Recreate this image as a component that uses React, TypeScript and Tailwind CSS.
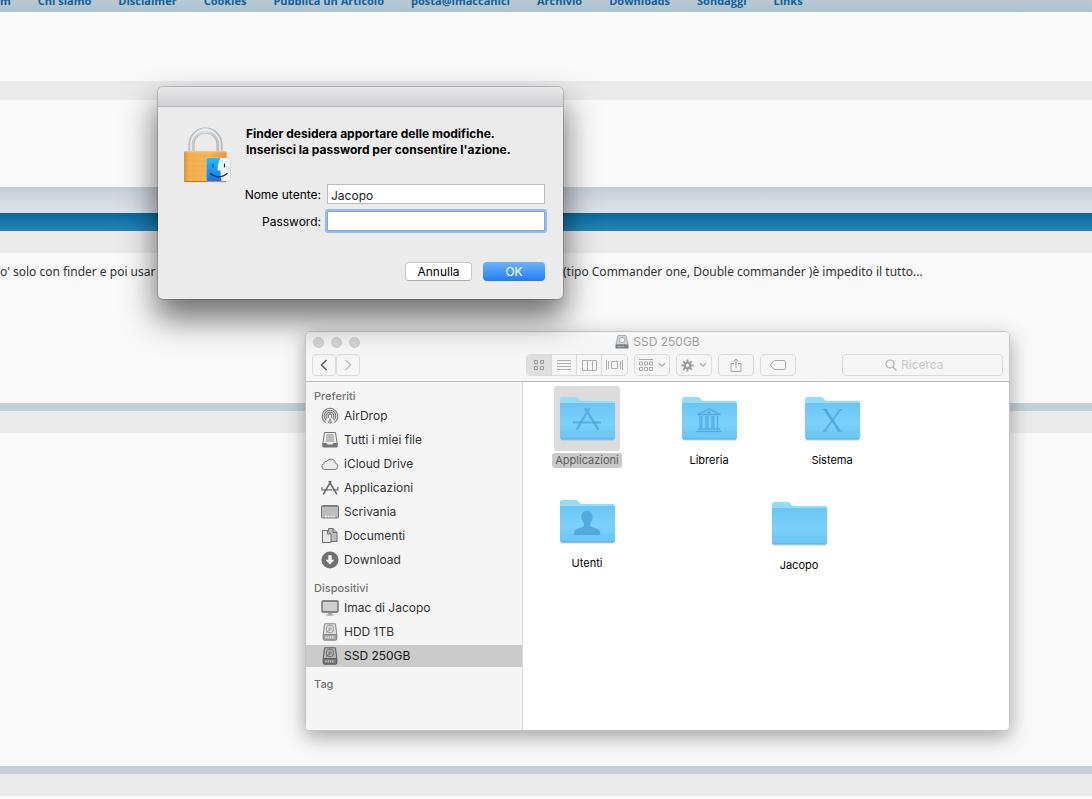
import { useState } from "react";
import type { ReactNode } from "react";

const navLinks = [
    "m",
    "Chi siamo",
    "Disclaimer",
    "Cookies",
    "Pubblica un Articolo",
    "posta@imaccanici",
    "Archivio",
    "Downloads",
    "Sondaggi",
    "Links",
];

/* ---------- sidebar icons ---------- */

function AirDropIcon() {
    return (
        <svg width="18" height="18" viewBox="0 0 18 18" fill="none" stroke="#757575" strokeWidth="1.1" strokeLinecap="round">
            <path d="M4.2 15.2a7.8 7.8 0 1 1 9.6 0" />
            <path d="M5 13.2a5.8 5.8 0 1 1 8 0" />
            <path d="M6 11.4a3.8 3.8 0 1 1 6 0" />
            <path d="M7.6 10.2a1.9 1.9 0 1 1 2.8 0" />
            <path d="M9 10l-2.6 6.6h5.2z" fill="#a3a3a3" stroke="none" />
        </svg>
    );
}

function AllFilesIcon() {
    return (
        <svg width="18" height="18" viewBox="0 0 18 18" fill="none" stroke="#757575">
            <path d="M3.5 1.5h11l1.500 10v4h-14v-4z" fill="#ececec" />
            <path d="M5.500 4h7M5.200 6h7.600M5 8h8M4.800 10h8.400" stroke="#8a8a8a" />
            <path d="M1.500 12h4l1 1.500h5l1-1.500h4v3.500q0 1-1 1h-13q-1 0-1-1z" fill="#757575" stroke="none" />
        </svg>
    );
}

function CloudIcon() {
    return (
        <svg width="18" height="18" viewBox="0 0 18 18" fill="#ececec" stroke="#7a7a7a">
            <path d="M4 14.5a3 3 0 0 1-.9-5.9 2.3 2.3 0 0 1 2.9-2.3 4.4 4.4 0 0 1 8.3 1.9 3.2 3.2 0 0 1-.3 6.3z" />
        </svg>
    );
}

function AppsIcon() {
    return (
        <svg width="18" height="18" viewBox="0 0 18 18" fill="none" stroke="#6b6b6b" strokeWidth="1.3" strokeLinecap="round">
            <path d="M9.8 2.5L2.6 14.8M8.2 2.5l7.4 12.4" strokeWidth="1.6" />
            <path d="M.8 10.8h16.4" strokeDasharray="10 1.6" />
            <path d="M1 8.6v1M16.8 8.6v1" />
        </svg>
    );
}

function DesktopIcon() {
    return (
        <svg width="18" height="18" viewBox="0 0 18 18" fill="none">
            <rect x=".5" y="2.5" width="17" height="12.5" rx="1" fill="#bdbdbd" stroke="#777" />
            <path d="M1 3.5h16" stroke="#8a8a8a" />
            <path d="M4 13.5h10" stroke="#f5f5f5" strokeWidth="1.6" strokeDasharray="1.5 1.2" />
        </svg>
    );
}

function DocumentsIcon() {
    return (
        <svg width="18" height="18" viewBox="0 0 18 18" fill="#bdbdbd" stroke="#6f6f6f">
            <path d="M7.5 1.5H12L16 5.5v9H7.5z" />
            <path d="M12 1.5v4h4" />
            <path d="M1.5 3.5h5L10 7v8.500H1.500z" fill="#e6e6e6" />
            <path d="M6.500 3.500V7H10" />
        </svg>
    );
}

function DownloadIcon() {
    return (
        <svg width="18" height="18" viewBox="0 0 18 18">
            <circle cx="9" cy="9" r="8.5" fill="#707070" />
            <path d="M7.3 4.3h3.4v4.5h2.8L9 13.6 4.5 8.8h2.8z" fill="#f5f5f5" />
        </svg>
    );
}

function ImacIcon() {
    return (
        <svg width="18" height="18" viewBox="0 0 18 18" fill="none">
            <rect x="1" y="2" width="16" height="11" rx="1" fill="#cfcfcf" stroke="#666" strokeWidth="1.3" />
            <path d="M7.5 13.5h3l.5 2H7z" fill="#9a9a9a" />
            <path d="M5.5 16h7" stroke="#8a8a8a" />
        </svg>
    );
}

function DiskIcon({ dark }: { dark?: boolean }) {
    const line = dark ? "#5a5a5a" : "#858585";
    return (
        <svg width="18" height="18" viewBox="0 0 18 18" fill="none" stroke={line}>
            <path d="M3.5.8h11l1.200 10.200v5q0 1-1 1H3.300q-1 0-1-1v-5z" fill={dark ? "#b5b5b5" : "#e0e0e0"} />
            <circle cx="9" cy="6" r="3.8" strokeWidth=".8" />
            <circle cx="9" cy="6" r="1.2" strokeWidth=".8" />
            <path d="M5.5 9.5L8 7.5" strokeWidth=".8" />
            <path d="M2.300 11.500h13.400v4.500q0 1-1 1H3.300q-1 0-1-1z" fill={dark ? "#777" : "#a5a5a5"} />
            <path d="M4.5 14.3h9" stroke={dark ? "#d5d5d5" : "#f3f3f3"} strokeWidth="1.8" strokeDasharray="1.2 1" />
        </svg>
    );
}

/* ---------- dialog ---------- */

function LockIcon() {
    return (
        <svg width="48" height="58" viewBox="0 0 48 58" fill="none">
            <defs>
                <linearGradient id="steel" x1="0" x2="1" y1="0" y2="0">
                    <stop offset="0" stopColor="#c3c7cb" />
                    <stop offset=".5" stopColor="#dfe2e5" />
                    <stop offset="1" stopColor="#b9bdc2" />
                </linearGradient>
                <linearGradient id="brass" x1="0" x2="1" y1="0" y2="0">
                    <stop offset="0" stopColor="#dc9338" />
                    <stop offset=".12" stopColor="#f3b050" />
                    <stop offset=".6" stopColor="#f6b55c" />
                    <stop offset="1" stopColor="#e0973b" />
                </linearGradient>
                <linearGradient id="faceBlue" x1="0" x2="0" y1="0" y2="1">
                    <stop offset="0" stopColor="#22c0fb" />
                    <stop offset="1" stopColor="#1a73e4" />
                </linearGradient>
            </defs>
            <path d="M7.5 26V18.5a14 14 0 0 1 28 0V26" stroke="#a9aeb3" strokeWidth="6" />
            <path d="M7.5 26V18.5a14 14 0 0 1 28 0V26" stroke="url(#steel)" strokeWidth="4.8" />
            <path d="M7 26V18.5A14.5 14.5 0 0 1 21.5 4a14.5 14.5 0 0 1 14.5 14.5V26" stroke="#f0f2f3" strokeWidth="1.4" />
            <rect x="0" y="25" width="42.5" height="31" rx="1.5" fill="url(#brass)" />
            <path d="M.5 25.8h41.5" stroke="#f9c984" />
            <path d="M.5 30h41.5M.5 35h41.5M.5 40h41.5M.5 45h41.5M.5 50h41.5" stroke="#e39a3c" strokeOpacity=".25" />
            <path d="M.5 55.6h41.5" stroke="#b87423" />
            <rect x="22.5" y="32" width="24" height="23" rx="1.5" fill="#f0f3f8" stroke="#c6ccd5" strokeWidth=".5" />
            <path d="M24 32h12.500c-2 4-2.800 8-3 12.500h3c0 4 .3 7 1 10.500H24q-1.500 0-1.500-1.500v-20q0-1.500 1.500-1.500z" fill="url(#faceBlue)" />
            <path d="M29 38v3M40.5 38v3" stroke="#16345c" strokeWidth="1.2" strokeLinecap="round" />
            <path d="M26.5 47.5c4.5 4.4 12 4.4 16.5 0" stroke="#16345c" strokeWidth="1.2" strokeLinecap="round" />
        </svg>
    );
}

function AuthDialog() {
    const [user, setUser] = useState("Jacopo");
    const [password, setPassword] = useState("");

    return (
        <form
            onSubmit={(e) => e.preventDefault()}
            className="absolute left-[158px] top-[87px] w-[405px] rounded-[5px] bg-[#ebebeb] font-[Inter,sans-serif] text-xs text-black shadow-[0_0_0_1px_rgba(0,0,0,0.18),0_18px_32px_2px_rgba(0,0,0,0.55)]"
        >
            <div className="h-5 rounded-t-[5px] border-b border-[#b5b5b5] bg-linear-to-b from-[#e9e7e9] to-[#d2d1d3]"></div>
            <div className="flex gap-[14px] pt-[19px] pr-[18px] pb-[18px] pl-[26px]">
                <LockIcon />
                <div className="flex-1">
                    <p className="font-bold leading-4">
                        Finder desidera apportare delle modifiche.
                        <br />
                        Inserisci la password per consentire l'azione.
                    </p>
                    <div className="mt-[26px] grid grid-cols-[75px_1fr] items-center gap-x-1.5 gap-y-[7px]">
                        <label htmlFor="user" className="justify-self-end pt-0.5 whitespace-nowrap">
                            Nome utente:
                        </label>
                        <input
                            id="user"
                            type="text"
                            value={user}
                            onChange={(e) => setUser(e.target.value)}
                            className="h-5 w-full border border-[#bdbdbd] bg-white px-[3px] pt-0.5 text-[#222] outline-none"
                        />
                        <label htmlFor="password" className="justify-self-end pt-0.5 whitespace-nowrap">
                            Password:
                        </label>
                        <input
                            id="password"
                            type="password"
                            value={password}
                            onChange={(e) => setPassword(e.target.value)}
                            className="h-5 w-full rounded-[1px] border border-[#7ea7de] bg-white px-[3px] shadow-[0_0_0_2px_#96bdf0] outline-none"
                        />
                    </div>
                    <div className="mt-[31px] flex justify-end gap-[11px]">
                        <button
                            type="button"
                            className="h-[19px] w-[67px] rounded-[4px] border border-[#c6c6c6] border-b-[#ababab] bg-white leading-none"
                        >
                            Annulla
                        </button>
                        <button
                            type="submit"
                            className="h-[19px] w-[62px] rounded-[4px] bg-linear-to-b from-[#6cb3fa] to-[#1f7cfb] leading-none text-white"
                        >
                            OK
                        </button>
                    </div>
                </div>
            </div>
        </form>
    );
}

/* ---------- finder ---------- */

type folderProps = {
    name: string;
    place: string;
    selected?: boolean;
    children?: ReactNode;
};

function Folder({ name, place, selected, children }: folderProps) {
    return (
        <button type="button" className={`absolute flex w-20 flex-col items-center gap-0.5 ${place}`}>
            <span className={`flex h-[65px] w-[66px] items-center justify-center rounded-[3px] ${selected ? "bg-[#dcdcdc]" : ""}`}>
                <svg width="56" height="46" viewBox="0 1 56 46" fill="none">
                    <defs>
                        <linearGradient id="folderFront" x1="0" x2="0" y1="0" y2="1">
                            <stop offset="0" stopColor="#6bc6f5" />
                            <stop offset=".55" stopColor="#7bd1fb" />
                            <stop offset="1" stopColor="#6ac4f4" />
                        </linearGradient>
                    </defs>
                    <path d="M2 45h53" stroke="#8f9aa3" strokeOpacity=".45" />
                    <path d="M1 4Q1 2 3 2h13.700q1.300 0 2.200 1l1.800 2q.8 1 2.300 1h31q2 0 2 2v30H1z" fill="#93dcfc" />
                    <path d="M1 8.500h55v34q0 2-2 2H3q-2 0-2-2z" fill="url(#folderFront)" />
                    <path d="M1 8.500h55" stroke="#5fbdee" strokeOpacity=".6" />
                    <path d="M1 37h55" stroke="#5fb9ea" strokeOpacity=".35" />
                    <path d="M2 44h53" stroke="#58aad9" strokeOpacity=".8" />
                    {children}
                </svg>
            </span>
            <span
                className={`rounded-[3px] px-[3px] text-[11px] leading-[15px] ${selected ? "bg-[#c9c9c9] text-[#5a5a5a]" : "text-black"}`}
            >
                {name}
            </span>
        </button>
    );
}

type sideItem = { label: string; icon: ReactNode; active?: boolean };

const favourites: sideItem[] = [
    { label: "AirDrop", icon: <AirDropIcon /> },
    { label: "Tutti i miei file", icon: <AllFilesIcon /> },
    { label: "iCloud Drive", icon: <CloudIcon /> },
    { label: "Applicazioni", icon: <AppsIcon /> },
    { label: "Scrivania", icon: <DesktopIcon /> },
    { label: "Documenti", icon: <DocumentsIcon /> },
    { label: "Download", icon: <DownloadIcon /> },
];

const devices: sideItem[] = [
    { label: "Imac di Jacopo", icon: <ImacIcon /> },
    { label: "HDD 1TB", icon: <DiskIcon /> },
    { label: "SSD 250GB", icon: <DiskIcon dark />, active: true },
];

function SideSection({ title, items }: { title: string; items: sideItem[] }) {
    return (
        <section>
            <h2 className="mb-px pl-2 text-[11px] font-medium leading-4 text-[#727272]">{title}</h2>
            <ul className="flex flex-col gap-0.5">
                {items.map((item) => (
                    <li key={item.label}>
                        <a
                            href="#"
                            className={`flex h-[22px] items-center gap-[5px] pl-[15px] ${item.active ? "bg-[#cbcbcb] text-[#111]" : "text-[#333]"}`}
                        >
                            {item.icon}
                            {item.label}
                        </a>
                    </li>
                ))}
            </ul>
        </section>
    );
}

function Chevron() {
    return (
        <svg width="8" height="6" viewBox="0 0 8 6" fill="none" stroke="#a8a8a8" strokeWidth="1.3">
            <path d="M1 1.2l3 3 3-3" />
        </svg>
    );
}

const navBtn = "flex h-[22px] w-6 items-center justify-center rounded-[4px] border border-[#dadada]";
const toolBtn = "flex h-[22px] w-9 items-center justify-center gap-[5px] rounded-[4px] border border-[#dadada]";

function Toolbar() {
    return (
        <div className="flex h-[22px] items-center px-1.5">
            <div className="mr-auto flex">
                <button type="button" aria-label="Indietro" className={navBtn}>
                    <svg width="8" height="12" viewBox="0 0 8 12" fill="none" stroke="#555" strokeWidth="1.4">
                        <path d="M6.5 1L1.5 6l5 5" />
                    </svg>
                </button>
                <button type="button" aria-label="Avanti" className={navBtn}>
                    <svg width="8" height="12" viewBox="0 0 8 12" fill="none" stroke="#bdbdbd" strokeWidth="1.4">
                        <path d="M1.5 1l5 5-5 5" />
                    </svg>
                </button>
            </div>
            <div className="mr-[46px] flex gap-1.5">
                <div className="grid h-[22px] w-[102px] grid-cols-4 divide-x divide-[#dadada] overflow-hidden rounded-[4px] border border-[#dadada]">
                    <button type="button" aria-label="Icone" className="flex items-center justify-center bg-[#dedede]">
                        <svg width="10" height="10" viewBox="0 0 10 10" fill="none" stroke="#9a9a9a">
                            <path d="M.5.5h3v3h-3zM6.5.5h3v3h-3zM.5 6.5h3v3h-3zM6.5 6.5h3v3h-3z" />
                        </svg>
                    </button>
                    <button type="button" aria-label="Elenco" className="flex items-center justify-center">
                        <svg width="14" height="10" viewBox="0 0 14 10" stroke="#b0b0b0">
                            <path d="M0 .5h14M0 3.5h14M0 6.5h14M0 9.5h14" />
                        </svg>
                    </button>
                    <button type="button" aria-label="Colonne" className="flex items-center justify-center">
                        <svg width="15" height="11" viewBox="0 0 15 11" fill="none" stroke="#b0b0b0">
                            <path d="M.5.5h14v10H.5zM5.5.5v10M10.5.5v10" />
                        </svg>
                    </button>
                    <button type="button" aria-label="Cover Flow" className="flex items-center justify-center">
                        <svg width="17" height="10" viewBox="0 0 17 10" fill="none" stroke="#b0b0b0">
                            <path d="M.5 0v10M2.5 1v8M5.500 1.500h6v7h-6zM14.500 1v8M16.500 0v10" />
                        </svg>
                    </button>
                </div>
                <button type="button" aria-label="Disponi" className={toolBtn}>
                    <svg width="14" height="12" viewBox="0 0 14 12" fill="none" stroke="#a8a8a8">
                        <path d="M0 .5h14M.5 3h3v3h-3zM5.5 3h3v3h-3zM10.5 3h3v3h-3zM.5 8.5h3v3h-3zM5.5 8.5h3v3h-3zM10.5 8.5h3v3h-3z" />
                    </svg>
                    <Chevron />
                </button>
                <button type="button" aria-label="Azioni" className={toolBtn}>
                    <svg width="13" height="13" viewBox="0 0 14 14" fill="none" stroke="#9c9c9c">
                        <circle cx="7" cy="7" r="3" strokeWidth="2.4" />
                        <path
                            d="M7 .5v3M7 10.5v3M.5 7h3M10.5 7h3M2.4 2.4l2.2 2.2M9.4 9.4l2.2 2.2M11.6 2.4L9.4 4.6M4.6 9.4l-2.2 2.2"
                            strokeWidth="1.9"
                        />
                    </svg>
                    <Chevron />
                </button>
                <button type="button" aria-label="Condividi" className={toolBtn}>
                    <svg width="12" height="14" viewBox="0 0 12 14" fill="none" stroke="#a8a8a8">
                        <path d="M4 5.5H1v8h10v-8H8M6 10V1M3.5 3.5L6 1l2.5 2.5" />
                    </svg>
                </button>
                <button type="button" aria-label="Tag" className={toolBtn}>
                    <svg width="16" height="10" viewBox="0 0 16 10" fill="none" stroke="#a8a8a8">
                        <path d="M4.5.5h10q1 0 1 1v7q0 1-1 1h-10L1 6.200q-1-1.200 0-2.400z" />
                        <circle cx="4.3" cy="5" r=".6" fill="#a8a8a8" stroke="none" />
                    </svg>
                </button>
            </div>
            <div className="flex h-[22px] w-[161px] items-center gap-1 rounded-[4px] border border-[#dadada] pl-[42px]">
                <svg width="12" height="12" viewBox="0 0 12 12" fill="none" stroke="#adadad" strokeWidth="1.2" className="shrink-0">
                    <circle cx="5" cy="5" r="4" />
                    <path d="M8 8l3.5 3.5" />
                </svg>
                <input
                    type="search"
                    aria-label="Ricerca"
                    placeholder="Ricerca"
                    className="w-full min-w-0 bg-transparent outline-none placeholder:text-[#c6c6c6]"
                />
            </div>
        </div>
    );
}

function FinderWindow() {
    return (
        <div className="absolute left-[305px] top-[331px] w-[705px] rounded-[5px] shadow-[0_6px_20px_rgba(0,0,0,0.35)]">
            <div className="overflow-hidden rounded-[5px] border border-[#c4c4c4] bg-white font-[Inter,sans-serif] text-xs">
                <header className="h-[50px] border-b border-[#b9b9b9] bg-[#f6f6f6]">
                    <div className="mb-0.5 grid h-5 grid-cols-[1fr_auto_1fr] items-center px-[7px]">
                        <div className="flex gap-[7px]">
                            <span className="size-[11px] rounded-full border border-[#cbcbcb] bg-[#d5d5d5]"></span>
                            <span className="size-[11px] rounded-full border border-[#cbcbcb] bg-[#d5d5d5]"></span>
                            <span className="size-[11px] rounded-full border border-[#cbcbcb] bg-[#d5d5d5]"></span>
                        </div>
                        <h1 className="flex items-center gap-1 text-[#9d9d9d]">
                            <svg width="14" height="14" viewBox="0 0 14 14" fill="none">
                                <path d="M3 .5h8l2 9H1z" fill="#d0d5d8" stroke="#a9afb2" />
                                <ellipse cx="7" cy="5" rx="3" ry="2.6" fill="#edf0f1" stroke="#a0a6a9" strokeWidth=".8" />
                                <path d="M.5 9.5h13v4H.5z" fill="#7c8184" />
                                <path d="M2 11.5h7" stroke="#a9aeb0" />
                            </svg>
                            SSD 250GB
                        </h1>
                    </div>
                    <Toolbar />
                </header>
                <div className="flex min-h-[348px]">
                    <aside className="flex w-[217px] flex-col gap-[9px] border-r border-[#dcdcdc] bg-[#f5f5f5] pt-1.5">
                        <SideSection title="Preferiti" items={favourites} />
                        <SideSection title="Dispositivi" items={devices} />
                        <SideSection title="Tag" items={[]} />
                    </aside>
                    <main className="relative flex-1">
                        <Folder name="Applicazioni" place="left-6 top-1" selected>
                            <g stroke="#4ba5d6" strokeWidth="1.8" strokeLinecap="round" strokeOpacity=".75">
                                <path d="M30 14L18 34M26.5 14L39 34" strokeWidth="2.4" />
                                <path d="M14.5 27.5h27" />
                            </g>
                        </Folder>
                        <Folder name="Libreria" place="left-[146px] top-1">
                            <g stroke="#4ba5d6" strokeWidth="1.3" strokeOpacity=".85">
                                <path d="M16.5 19.5L28 14l11.5 5.5z" />
                                <path d="M26 17.5h4" />
                                <path d="M19 21v12M20.800 21v12M25 21v12M26.800 21v12M31 21v12M32.800 21v12M36.500 21v12" />
                                <path d="M17 34h22M15.5 36.5h25" strokeWidth="1.6" />
                            </g>
                        </Folder>
                        <Folder name="Sistema" place="left-[269px] top-1">
                            <g stroke="#4ba5d6" strokeOpacity=".85">
                                <path d="M36.5 14.5L20.5 36" strokeWidth="1.6" />
                                <path d="M21 14.5L35.5 36" strokeWidth="2.6" />
                                <path d="M18.5 14.5h5M34.5 14.5h4M18.5 36h4M33 36h5.5" />
                            </g>
                        </Folder>
                        <Folder name="Utenti" place="left-6 top-[107px]">
                            <path
                                d="M28 13c3.8 0 5.8 2.6 5.6 6.2-.1 2.3-1 4.3-2.4 5.8v2.7c.8 1.7 9 2.3 10 6.3v3H15v-3c1-4 9.2-4.6 10-6.3V25c-1.5-1.5-2.5-3.5-2.6-5.8C22.2 15.6 24.2 13 28 13z"
                                fill="#4ba5d6"
                                fillOpacity=".85"
                            />
                        </Folder>
                        <Folder name="Jacopo" place="left-[236px] top-[109px]" />
                    </main>
                </div>
            </div>
        </div>
    );
}

export default function App() {
    return (
        <div className="relative flex min-h-screen flex-col overflow-hidden bg-[#f9f9f9]">
            <nav className="flex h-3 items-end gap-[27px] overflow-hidden bg-linear-to-b from-[#b9c9d3] to-[#abc2cf] pb-[3px] font-['Open_Sans',sans-serif] text-[11px] font-bold leading-4 text-[#10609a]">
                {navLinks.map((link) => (
                    <a key={link} href="#" className="whitespace-nowrap">
                        {link}
                    </a>
                ))}
            </nav>
            <div className="h-[69px]"></div>
            <div className="h-[19px] bg-[#eaeaea]"></div>
            <div className="h-[87px]"></div>
            <div className="h-[26px] bg-linear-to-b from-[#c5ced6] to-[#dee3ea]"></div>
            <div className="h-[18px] bg-linear-to-b from-[#06699e] to-[#2485b8]"></div>
            <div className="h-[22px] bg-[#eaeaea]"></div>
            <div className="flex h-[150px] pt-[11px] font-['Noto_Sans',sans-serif] text-xs leading-4 whitespace-nowrap text-[#333]">
                <span className="w-[563px]">o' solo con finder e poi usar</span>
                <span>(tipo Commander one, Double commander )è impedito il tutto...</span>
            </div>
            <div className="h-2 bg-[#c4cfd8]"></div>
            <div className="h-[22px] bg-[#eaeaea]"></div>
            <div className="h-[333px]"></div>
            <div className="h-2 bg-[#c4cfd8]"></div>
            <div className="h-[22px] bg-[#eaeaea]"></div>

            <FinderWindow />
            <AuthDialog />
        </div>
    );
}
